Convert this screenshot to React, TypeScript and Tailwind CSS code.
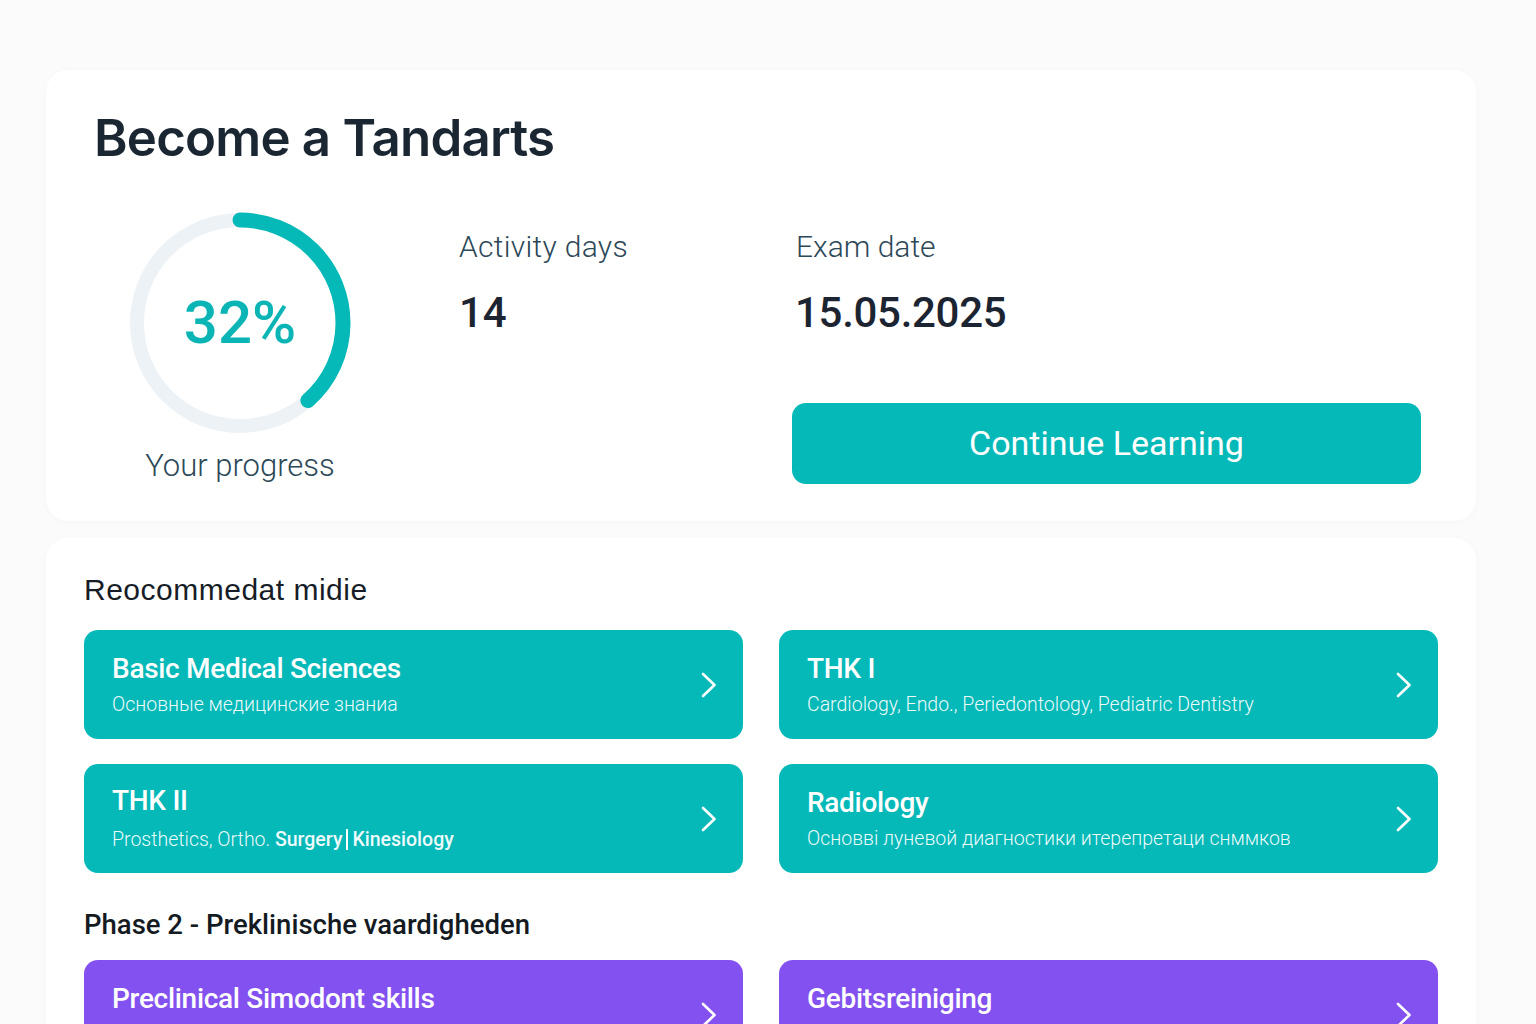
import type { ReactNode } from 'react';

interface Module {
  title: string;
  subtitle: ReactNode;
}

const recommended: Module[] = [
  { title: 'Basic Medical Sciences', subtitle: 'Основные медицинские знаниа' },
  { title: 'THK I', subtitle: 'Cardiology, Endo., Periedontology, Pediatric Dentistry' },
  {
    title: 'THK II',
    subtitle: (
      <>
        Prosthetics, Ortho. <span className="font-medium">Surgery</span>
        <span className="mx-[4px] inline-block h-[21px] w-[2px] translate-y-[4px] bg-white" />
        <span className="font-medium">Kinesiology</span>
      </>
    ),
  },
  { title: 'Radiology', subtitle: 'Основві луневой диагностики итерепретаци снммков' },
];

const phase2: Module[] = [
  { title: 'Preclinical Simodont skills', subtitle: 'Simodont training' },
  { title: 'Gebitsreiniging', subtitle: 'Preventie en mondhygiëne' },
];

function ProgressRing({ value }: { value: number }) {
  const r = 103;
  const c = 2 * Math.PI * r;
  return (
    <div className="relative h-[224px] w-[224px]">
      <svg width="224" height="224" viewBox="0 0 224 224" className="-rotate-90">
        <circle cx="112" cy="112" r={r} fill="none" stroke="#edf2f6" strokeWidth="14" />
        <circle
          cx="112"
          cy="112"
          r={r}
          fill="none"
          stroke="#06b9b9"
          strokeWidth="15"
          strokeLinecap="round"
          strokeDasharray={`${c * value} ${c}`}
        />
      </svg>
      <div className="absolute inset-0 flex items-center justify-center">
        <span className="text-[60px] font-medium leading-none text-[#0bb5b5]">32%</span>
      </div>
    </div>
  );
}

function Chevron() {
  return (
    <svg width="16" height="26" viewBox="0 0 16 26" fill="none" stroke="currentColor" strokeWidth="2.6" strokeLinecap="round" strokeLinejoin="round">
      <polyline points="2,2 13.5,13 2,24" />
    </svg>
  );
}

function ModuleTile({ module, color }: { module: Module; color: string }) {
  return (
    <button
      className={`flex h-[109px] items-center justify-between rounded-[14px] pl-[28px] pr-[26px] text-left text-white ${color}`}
    >
      <div className="flex flex-col gap-[8px]">
        <span className="text-[28px] font-medium leading-[32px] tracking-[-0.3px]">{module.title}</span>
        <span className="text-[19.5px] font-light leading-[24px] text-white/95">{module.subtitle}</span>
      </div>
      <Chevron />
    </button>
  );
}

export default function App() {
  return (
    <div className="min-h-screen bg-[#fbfbfb] px-[46px] pt-[70px] font-['Roboto',sans-serif] text-[#1c2531]">
      <section className="w-[1430px] rounded-[22px] bg-white pb-[37px] pl-[48px] pt-[37px] shadow-[0_1px_8px_rgba(0,0,0,0.025)]">
        <h1 className="font-['Inter',sans-serif] text-[51px] font-semibold leading-[62px] tracking-[-0.8px] text-[#1b2633]">
          Become a Tandarts
        </h1>

        <div className="mt-[42px] flex">
          <div className="flex w-[292px] flex-col items-center">
            <ProgressRing value={0.385} />
            <span className="mt-[14px] text-[31px] font-light leading-[34px] text-[#2c4858]">Your progress</span>
          </div>

          <div className="ml-[73px] w-[333px] pt-[19px]">
            <div className="text-[30px] font-light leading-[34px] tracking-[0.3px] text-[#2c4858]">Activity days</div>
            <div className="mt-[24px] text-[42px] font-medium leading-[50px] text-[#1b2430]">14</div>
          </div>

          <div className="flex flex-col pt-[19px]">
            <div className="pl-[4px] text-[30px] font-light leading-[34px] text-[#2c4858]">Exam date</div>
            <div className="mt-[24px] pl-[3px] text-[42px] font-medium leading-[50px] tracking-[-0.3px] text-[#1b2430]">15.05.2025</div>
            <button className="mt-[65px] h-[81px] w-[629px] rounded-[14px] bg-[#06b9b9] text-[34px] font-normal text-white">
              Continue Learning
            </button>
          </div>
        </div>
      </section>

      <section className="mt-[17px] w-[1430px] rounded-t-[22px] bg-white px-[38px] pb-[40px] pt-[35px] shadow-[0_1px_8px_rgba(0,0,0,0.025)]">
        <h2 className="font-['Liberation_Sans',sans-serif] text-[30px] font-normal leading-[34px] tracking-[0.5px] text-[#161d27]">
          Reocommedat midie
        </h2>
        <div className="mt-[23px] grid grid-cols-2 gap-x-[36px] gap-y-[25px]">
          {recommended.map((m) => (
            <ModuleTile key={m.title} module={m} color="bg-[#06b9b9]" />
          ))}
        </div>

        <h2 className="mt-[36px] text-[27.5px] font-medium leading-[32px] text-[#141a22]">
          Phase 2 - Preklinische vaardigheden
        </h2>
        <div className="mt-[19px] grid grid-cols-2 gap-x-[36px] gap-y-[25px]">
          {phase2.map((m) => (
            <ModuleTile key={m.title} module={m} color="bg-[#8351f0]" />
          ))}
        </div>
      </section>
    </div>
  );
}
